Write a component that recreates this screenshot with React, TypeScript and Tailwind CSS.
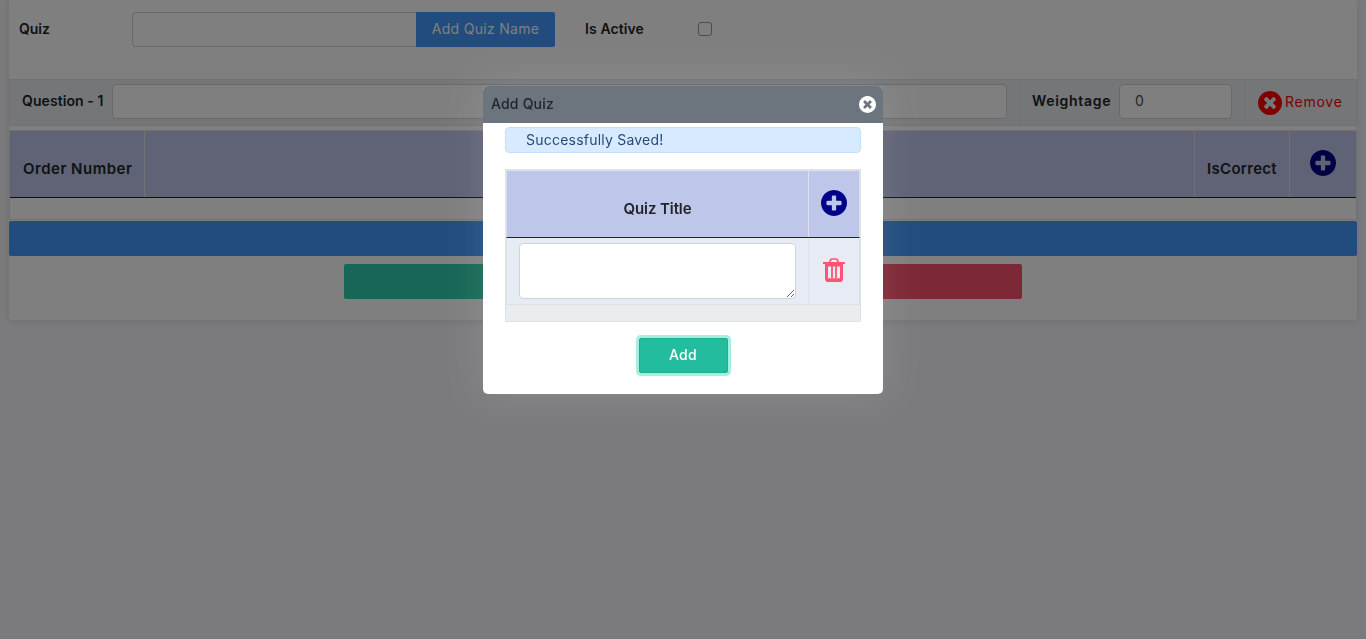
import React from "react";

const DISC =
  "q0 209-103 385.5t-279.5 279.5-385.5 103-385.5-103-279.5-279.5-103-385.5 103-385.5 279.5-279.5 385.5-103 385.5 103 279.5 279.5 103 385.5z";

function PlusCircle({ size }: { size: number }) {
  return (
    <svg width={size} height={size} viewBox="0 128 1536 1536" fill="currentColor">
      <path
        d={
          "M1216 960v-128q0-26-19-45t-45-19h-256v-256q0-26-19-45t-45-19h-128q-26 0-45 19t-19 45v256h-256q-26 0-45 19t-19 45v128q0 26 19 45t45 19h256v256q0 26 19 45t45 19h128q26 0 45-19t19-45v-256h256q26 0 45-19t19-45zm320-64" +
          DISC
        }
      />
    </svg>
  );
}

function TimesCircle({ size }: { size: number }) {
  return (
    <svg width={size} height={size} viewBox="0 128 1536 1536" fill="currentColor">
      <path
        d={
          "M1149 1122q0-26-19-45l-181-181 181-181q19-19 19-45 0-27-19-46l-90-90q-19-19-46-19-26 0-45 19l-181 181-181-181q-19-19-45-19-27 0-46 19l-90 90q-19 19-19 46 0 26 19 45l181 181-181 181q-19 19-19 45 0 27 19 46l90 90q19 19 46 19 26 0 45-19l181-181 181 181q19 19 45 19 27 0 46-19l90-90q19-19 19-46zm387-226" +
          DISC
        }
      />
    </svg>
  );
}

function TrashIcon() {
  return (
    <svg width="22" height="24" viewBox="0 0 22 24" fill="none" stroke="#fd5573">
      <path d="M0 5h22" strokeWidth="2" />
      <path d="M6.5 5L7.6 1.9Q8 1 9 1h4q1 0 1.4.9L15.5 5" strokeWidth="1.7" />
      <path d="M3.5 6v14.4q0 2.1 2.1 2.1h10.8q2.1 0 2.1-2.1V6" strokeWidth="3" />
      <path d="M9 8v12M13 8v12" strokeWidth="1.8" />
      <path d="M3.5 7h15M4 21.8h14" strokeWidth="3" />
    </svg>
  );
}

function QuizPage() {
  return (
    <main className="mx-[9px] h-[320px] w-[1348px] rounded-b bg-white shadow-[0_1px_8px_1px_rgba(69,65,78,0.12)]">
      <div className="flex h-[79px] items-start pt-3 font-semibold">
        <label className="ml-2.5 w-[113px] pt-[7px]">
          <span className="tracking-[-0.02px]">Quiz</span>
        </label>
        <input className="h-[35px] w-[284px] rounded-l border border-r-0 border-[#ced4da] bg-white" />
        <button className="h-[35px] w-[139px] rounded-r-xs bg-[#4298fa] pb-0.5 font-normal tracking-[0.3px] text-white">
          Add Quiz Name
        </button>
        <label className="ml-[30px] w-[113px] pt-[7px] tracking-[0.1px]">Is Active</label>
        <span className="mt-[10px] size-3.5 rounded-[3px] border border-[#999] bg-white" />
      </div>
      <div className="flex h-[47px] border border-[#dee2e6] bg-[#e9ecef] font-semibold">
        <div className="flex w-[1009px] items-center pb-[2px] pl-3">
          <span className="w-[90px] pb-0.5 whitespace-nowrap tracking-[0.08px]">Question - 1</span>
          <input className="h-[35px] w-[895px] rounded border border-[#ced4da] bg-white" />
        </div>
        <div className="flex w-[226px] items-center border-l border-[#dee2e6] pb-[2px] pl-3">
          <span className="w-[87px] pb-0.5 tracking-[0.7px]">Weightage</span>
          <input
            className="h-[35px] w-[113px] rounded border border-[#ced4da] bg-white pb-0.5 pl-[15px] font-normal text-[#495057]"
            defaultValue="0"
          />
        </div>
        <div className="flex flex-1 items-center gap-[3px] border-l border-[#dee2e6] pl-[12px] font-normal text-[#ff0000]">
          <TimesCircle size={24} />
          <span className="pb-px tracking-[0.75px]">Remove</span>
        </div>
      </div>
      <div className="mt-1 h-[90px] border border-[#dee2e6]">
        <div className="flex h-[67px] border-b border-[#212529] bg-[#c0c6ec] text-[15px] font-semibold">
          <div className="w-[135px] border-r border-[#dee2e6] pt-7 pl-[13px] whitespace-nowrap">
            <span className="tracking-[0.5px]">Order Number</span>
          </div>
          <div className="w-[1050px] border-r border-[#dee2e6]" />
          <div className="w-[95px] border-r border-[#dee2e6] pt-7 text-center tracking-[0.3px]">IsCorrect</div>
          <div className="flex flex-1 justify-center pt-[19px] text-[#00008b]">
            <PlusCircle size={26} />
          </div>
        </div>
      </div>
      <div className="mt-px h-[35px] rounded-xs bg-[#4298fa]" />
      <div className="mt-2 flex justify-center gap-2.5">
        <div className="h-[35px] w-[334px] rounded-xs bg-[#30cfac]" />
        <div className="h-[35px] w-[334px] rounded-xs bg-[#fb516e]" />
      </div>
    </main>
  );
}

function AddQuizModal() {
  return (
    <section className="h-[308px] w-[400px] rounded-[5px] bg-white shadow-[0_0_40px_rgba(255,255,255,0.12)]">
      <header className="flex h-[37px] items-center justify-between rounded-t-[5px] bg-[#6c757d] pr-[7px] pl-2">
        <h1 className="pb-px font-medium tracking-[0.2px]">Add Quiz</h1>
        <span className="text-white">
          <TimesCircle size={17} />
        </span>
      </header>
      <div className="px-[22px] pt-1">
        <p className="h-[26px] rounded border border-[#c4deff] bg-[#d8eaff] pl-5 leading-6 tracking-[0.22px] text-[#2a4b75]">
          Successfully Saved!
        </p>
        <div className="mt-4 h-[153px] border border-[#dee2e6] bg-[#e9edf0]">
          <div className="flex h-[68px] border border-[#dee2e6] border-b-[#212529] bg-[#bec6ea] text-[15px] font-semibold">
            <div className="w-[302px] border-r border-[#dee2e6] pt-7 text-center tracking-[-0.1px]">Quiz Title</div>
            <div className="flex flex-1 justify-center pt-[19px] text-[#00008b]">
              <PlusCircle size={26} />
            </div>
          </div>
          <div className="flex h-[67px] border border-t-0 border-[#dee2e6] bg-[#e7ebf4]">
            <div className="w-[302px] border-r border-[#dee2e6] pt-[5px] pl-3">
              <textarea className="block h-[56px] w-[277px] resize rounded border border-[#ced4da] bg-white" />
            </div>
            <div className="flex flex-1 justify-center pt-5">
              <TrashIcon />
            </div>
          </div>
        </div>
        <button className="mx-auto mt-4 block h-[35px] w-[89px] rounded-xs border border-[#20ae91] bg-[#24bc9f] pb-0.5 font-medium tracking-[0.3px] text-white shadow-[0_0_0_3px_#a6eedf]">
          Add
        </button>
      </div>
    </section>
  );
}

export default function App() {
  return (
    <div className="h-[639px] overflow-hidden bg-[#f7f7fb] font-['Inter',sans-serif] text-[14px] leading-5 text-[#212529]">
      <QuizPage />
      <div className="fixed inset-0 flex items-start justify-center bg-black/50 pt-[86px]">
        <AddQuizModal />
      </div>
    </div>
  );
}
